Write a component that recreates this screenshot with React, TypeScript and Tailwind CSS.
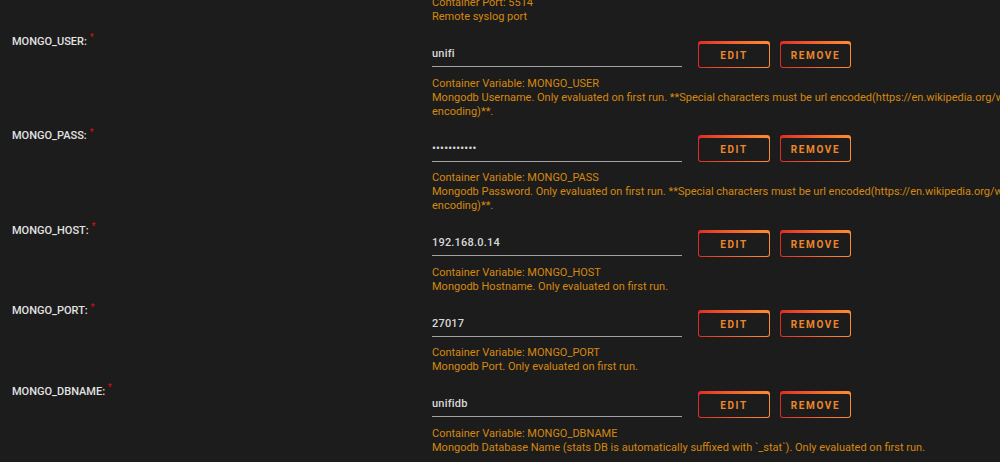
type Variable = {
  label: string;
  target: string;
  kind: 'Port' | 'Variable';
  value: string;
  secret?: boolean;
  description: string;
};

const variables: Variable[] = [
  {
    label: 'Port 5514',
    target: '5514',
    kind: 'Port',
    value: '5514',
    description: 'Remote syslog port',
  },
  {
    label: 'MONGO_USER',
    target: 'MONGO_USER',
    kind: 'Variable',
    value: 'unifi',
    description:
      'Mongodb Username. Only evaluated on first run. **Special characters must be url encoded(https://en.wikipedia.org/wiki/Percent-encoding)**.',
  },
  {
    label: 'MONGO_PASS',
    target: 'MONGO_PASS',
    kind: 'Variable',
    value: 'unifipasswd',
    secret: true,
    description:
      'Mongodb Password. Only evaluated on first run. **Special characters must be url encoded(https://en.wikipedia.org/wiki/Percent-encoding)**.',
  },
  {
    label: 'MONGO_HOST',
    target: 'MONGO_HOST',
    kind: 'Variable',
    value: '192.168.0.14',
    description: 'Mongodb Hostname. Only evaluated on first run.',
  },
  {
    label: 'MONGO_PORT',
    target: 'MONGO_PORT',
    kind: 'Variable',
    value: '27017',
    description: 'Mongodb Port. Only evaluated on first run.',
  },
  {
    label: 'MONGO_DBNAME',
    target: 'MONGO_DBNAME',
    kind: 'Variable',
    value: 'unifidb',
    description:
      'Mongodb Database Name (stats DB is automatically suffixed with `_stat`). Only evaluated on first run.',
  },
];

function OutlineButton({ children, width }: { children: React.ReactNode; width: string }) {
  return (
    <div className={`bg-linear-to-r from-[#e22828] to-[#ff8d2f] p-px rounded-[3px] ${width}`}>
      <button className="w-full h-[23px] rounded-[2px] bg-[#1c1c1c] text-[#ec872c] font-bold text-[10px] tracking-[1.6px] uppercase">
        {children}
      </button>
    </div>
  );
}

function VariableRow({ v }: { v: Variable }) {
  return (
    <div className="flex pb-[10.5px]">
      <div className="w-[432px] shrink-0 pl-3 text-[11px] leading-[14px] font-medium text-[#e2e2e2]">
        {v.label}: <sup className="text-[#cc1111] text-[9px]">*</sup>
      </div>
      <div className="w-[640px] shrink-0 pt-[6px]">
        <div className="flex items-center">
          <input
            readOnly
            type={v.secret ? 'password' : 'text'}
            value={v.value}
            className="w-[250px] h-[26px] bg-transparent border-b border-[#a3a3a3] outline-none text-[11px] font-medium text-[#d8d8d8] tracking-[0.2px]"
          />
          <div className="ml-[16px]">
            <OutlineButton width="w-[72px]">Edit</OutlineButton>
          </div>
          <div className="ml-[10px]">
            <OutlineButton width="w-[71px]">Remove</OutlineButton>
          </div>
        </div>
        <div className="mt-[9px] text-[11px] leading-[14px] text-[#d4880f]">
          Container {v.kind}: {v.target}
          <br />
          {v.description}
        </div>
      </div>
    </div>
  );
}

export default function App() {
  return (
    <div className="h-screen w-full overflow-hidden bg-[#1c1c1c] font-['Roboto',sans-serif]">
      <div className="mt-[-46px]">
        {variables.map(v => (
          <VariableRow key={v.label} v={v} />
        ))}
      </div>
    </div>
  );
}
